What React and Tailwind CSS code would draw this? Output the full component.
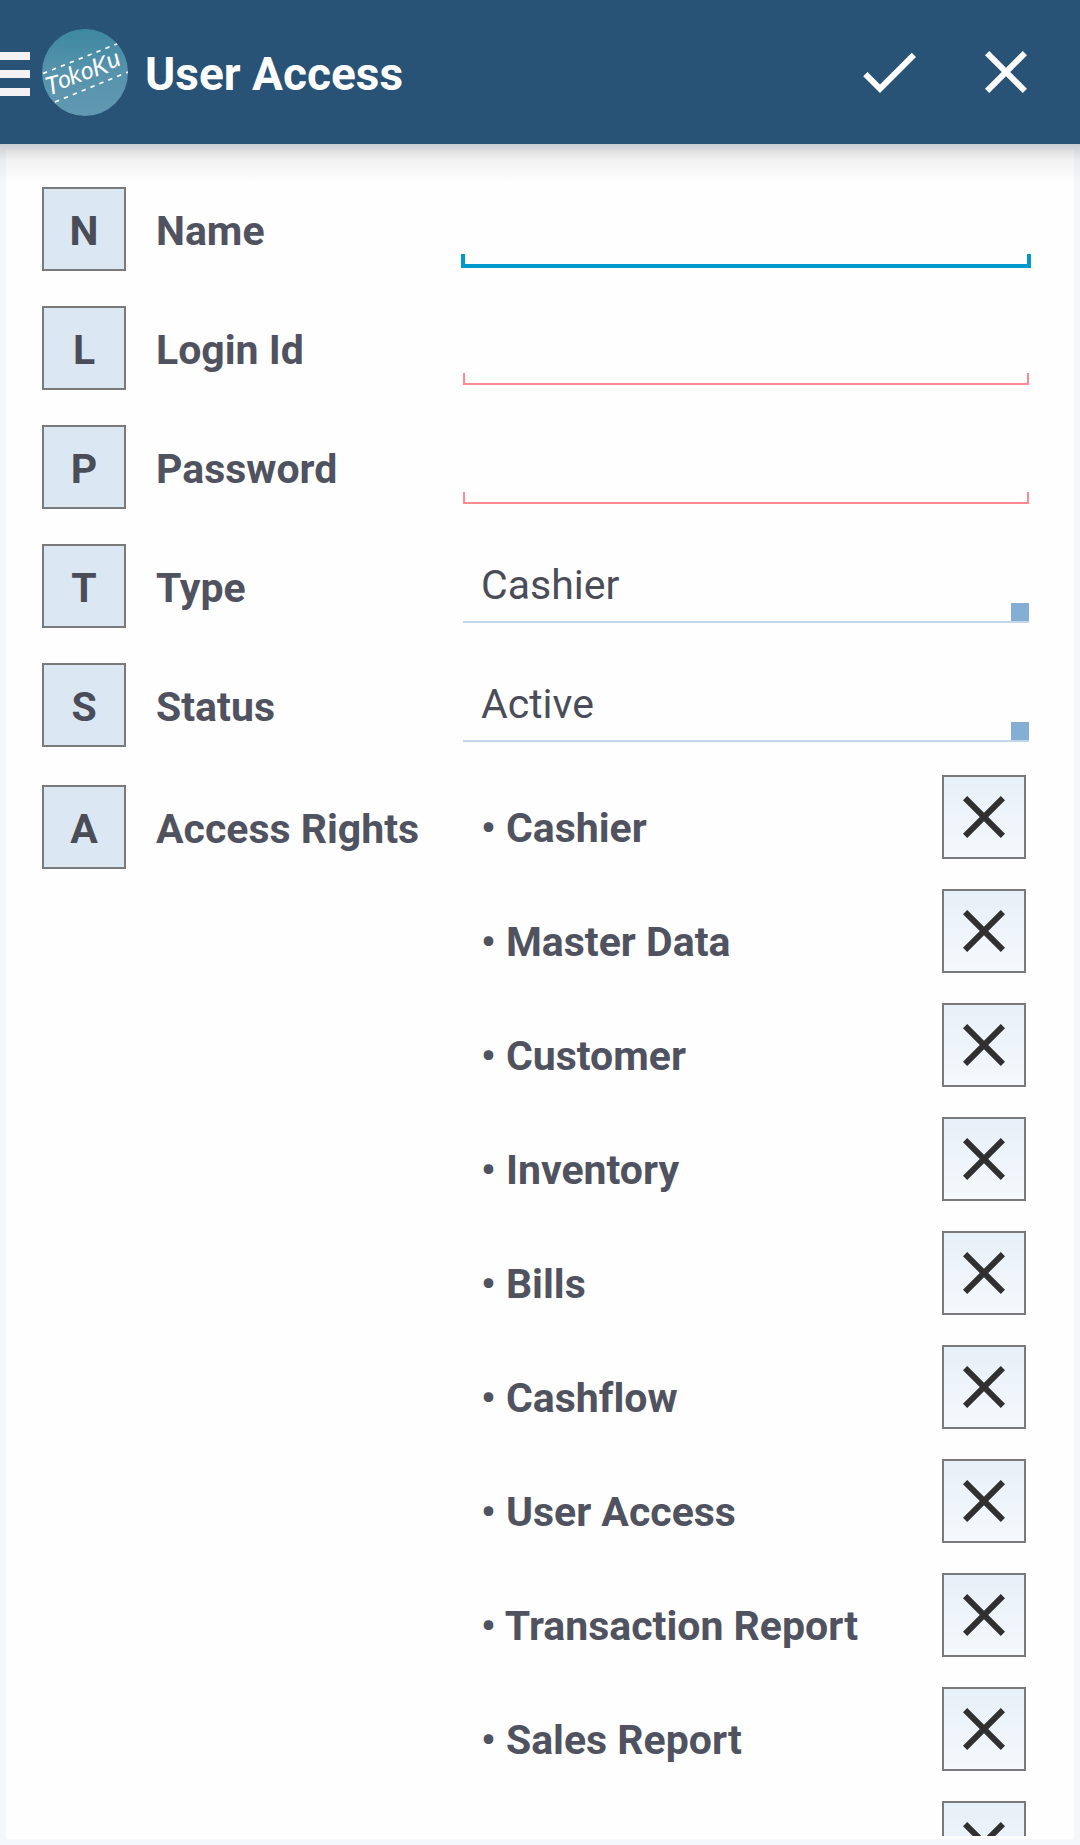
const fields = [
  { letter: "N", label: "Name", kind: "focused" },
  { letter: "L", label: "Login Id", kind: "required" },
  { letter: "P", label: "Password", kind: "required" },
  { letter: "T", label: "Type", kind: "select", value: "Cashier" },
  { letter: "S", label: "Status", kind: "select", value: "Active" },
];

const rights = [
  "Cashier",
  "Master Data",
  "Customer",
  "Inventory",
  "Bills",
  "Cashflow",
  "User Access",
  "Transaction Report",
  "Sales Report",
  "",
];

function CloseIcon({ className }) {
  return (
    <svg viewBox="0 0 24 24" fill="currentColor" className={className}>
      <path d="M19 6.41L17.59 5 12 10.59 6.41 5 5 6.41 10.59 12 5 17.59 6.41 19 12 13.41 17.59 19 19 17.59 13.41 12z" />
    </svg>
  );
}

function CheckIcon({ className }) {
  return (
    <svg viewBox="0 0 24 24" fill="currentColor" className={className}>
      <path d="M9 16.17L4.83 12l-1.42 1.41L9 19 21 7l-1.41-1.41z" />
    </svg>
  );
}

function Logo() {
  return (
    <svg viewBox="0 0 86 87" className="ml-3 h-[87px] w-[86px] shrink-0">
      <defs>
        <linearGradient id="disc" x1="0" y1="0" x2="0" y2="1">
          <stop offset="0" stopColor="#3c88a0" />
          <stop offset="0.45" stopColor="#5592ab" />
          <stop offset="1" stopColor="#6298b2" />
        </linearGradient>
        <clipPath id="round">
          <ellipse cx="43" cy="43.5" rx="43" ry="43.5" />
        </clipPath>
      </defs>
      <ellipse cx="43" cy="43.5" rx="43" ry="43.5" fill="url(#disc)" />
      <g clipPath="url(#round)" stroke="#fff" strokeWidth="1.7" strokeDasharray="4.4 5.2">
        <path d="M1 44.5L76 14.5" />
        <path d="M13 73L86 43" />
      </g>
      <text
        x="6 19 30 42 53 68"
        y="66.5 60.5 56 52 48 40.5"
        rotate="-14 -22 -20 -24 -18 -22"
        fill="#fff"
        className="font-['Lato'] text-[25px] italic"
      >
        TokoKu
      </text>
    </svg>
  );
}

function Tile({ children }) {
  return (
    <div className="flex size-[84px] shrink-0 items-center justify-center border-2 border-[#7a7a7a] bg-[#dbe8f3] pt-[3px] text-[41px] leading-[50px] font-bold text-[#4a4d58]">
      {children}
    </div>
  );
}

function Label({ children }) {
  return <div className="ml-[30px] w-[307px] shrink-0 pt-[3px] leading-[50px] whitespace-nowrap">{children}</div>;
}

function Field({ kind, value }) {
  if (kind === "focused") {
    return (
      <div className="-ml-0.5 flex h-[81px] w-[570px] flex-col justify-end self-start">
        <div className="h-3.5 border-4 border-t-0 border-[#0099cc]" />
      </div>
    );
  }
  if (kind === "required") {
    return (
      <div className="flex h-[79px] w-[566px] flex-col justify-end self-start">
        <div className="h-3 border-2 border-t-0 border-[#ff8b90]" />
      </div>
    );
  }
  return (
    <div className="flex h-[79px] w-[566px] items-end justify-between self-start border-b-2 border-[#c2d8ea] pl-[18px] font-normal text-[#4a4d58]">
      <span className="pb-[11px] leading-[50px]">{value}</span>
      <span className="size-[18px] bg-[#84aed3]" />
    </div>
  );
}

export default function App() {
  return (
    <div className="flex h-[1845px] w-[1080px] flex-col overflow-hidden bg-[#f4f8fc] font-['Roboto',sans-serif] [font-variant-ligatures:none]">
      <header className="relative flex h-36 shrink-0 items-center bg-[#285276] text-white">
        <div className="flex flex-col gap-2.5 pt-1">
          <div className="h-2 w-[30px] bg-[#f5f2f6]" />
          <div className="h-2 w-[30px] bg-[#f5f2f6]" />
          <div className="h-2 w-[30px] bg-[#f5f2f6]" />
        </div>
        <Logo />
        <h1 className="ml-[17px] grow pt-1 text-[46px] leading-[54px] font-bold">User Access</h1>
        <CheckIcon className="mr-[45px] size-[72px]" />
        <CloseIcon className="mr-[38px] size-[72px]" />
        <div className="absolute top-full left-0 h-10 w-full bg-linear-to-b from-black/17 via-black/5 via-40% to-transparent" />
      </header>
      <main className="mx-1.5 mt-1.5 mb-1.5 min-h-0 grow overflow-hidden bg-[#fefefe] pb-[3px]">
        <div className="h-full overflow-hidden pt-[37px] pl-9 text-[41px] font-bold text-[#50535f]">
          <div className="flex flex-col gap-[35px]">
            {fields.map((f) => (
              <div key={f.label} className="flex h-[84px] items-center">
                <Tile>{f.letter}</Tile>
                <Label>{f.label}</Label>
                <Field kind={f.kind} value={f.value} />
              </div>
            ))}
          </div>
          <div className="mt-7 flex items-start">
            <div className="mt-2.5 flex items-center">
              <Tile>A</Tile>
              <Label>Access Rights</Label>
            </div>
            <div className="flex w-[563px] flex-col gap-[30px]">
              {rights.map((name, i) => (
                <div key={i} className="flex h-[84px] items-center justify-between pl-[18px]">
                  <span className="pt-[22px] leading-[50px] whitespace-nowrap">{name && `• ${name}`}</span>
                  <button className="flex size-[84px] items-center justify-center border-2 border-[#7a7a7a] bg-linear-to-b from-[#e7eff8] to-[#f5f9fd] text-[#303030]">
                    <CloseIcon className="size-[72px] shrink-0" />
                  </button>
                </div>
              ))}
            </div>
          </div>
        </div>
      </main>
    </div>
  );
}
